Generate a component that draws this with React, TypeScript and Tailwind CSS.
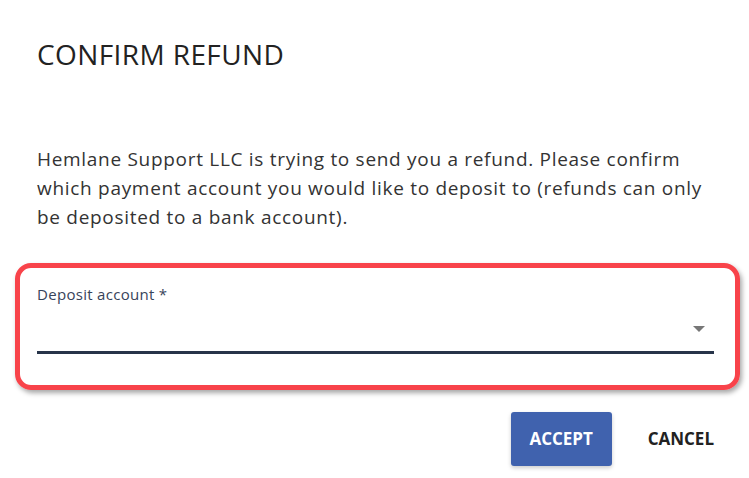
export default function App() {
  return (
    <div
      className="w-[749px] h-[478px] bg-white overflow-hidden"
      style={{ fontFamily: '"Open Sans", "Noto Sans", sans-serif' }}
    >
      <h1 className="mt-[36px] ml-[37px] text-[28px] leading-[36px] font-normal tracking-[0.4px] text-[#222]">
        CONFIRM REFUND
      </h1>
      <p className="mt-[73px] ml-[37px] mr-[20px] text-[19px] leading-[29px] tracking-[0.7px] text-[#333] whitespace-nowrap">
        Hemlane Support LLC is trying to send you a refund. Please confirm
        <br />
        which payment account you would like to deposit to (refunds can only
        <br />
        be deposited to a bank account).
      </p>
      <div className="mt-[31px] ml-[15px] mr-[9px] rounded-[16px] border-[5px] border-[#f8434a] shadow-[2px_3px_5px_rgba(0,0,0,0.35)] pt-[16px] pb-[31px] pl-[17px] pr-[21px]">
        <label className="block text-[15px] leading-[20px] tracking-[0.3px] text-[#37435a]">Deposit account *</label>
        <div className="h-[50px] flex items-center justify-end pr-[9px] pt-[3px] border-b-[3px] border-[#273449]">
          <svg width="12" height="6" viewBox="0 0 12 6">
            <path d="M0 0 L12 0 L6 6 Z" fill="#777" />
          </svg>
        </div>
      </div>
      <div className="mt-[22px] flex justify-end items-center pr-[35px]">
        <button className="w-[101px] h-[54px] rounded-[3px] bg-[#4062ae] text-white text-[17px] font-bold shadow-[0_2px_4px_rgba(0,0,0,0.2)]">
          ACCEPT
        </button>
        <button className="ml-[36px] text-[17px] font-bold text-[#222]">CANCEL</button>
      </div>
    </div>
  );
}
